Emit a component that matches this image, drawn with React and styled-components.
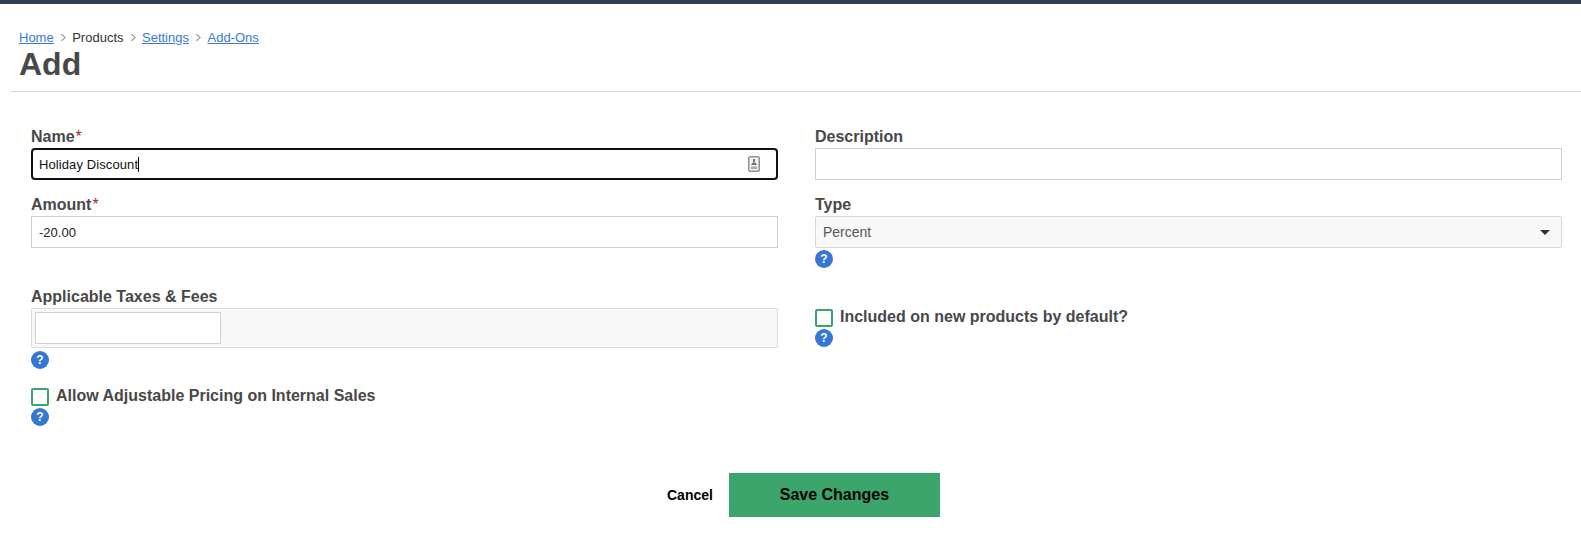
import React from "react";
import styled, { createGlobalStyle } from "styled-components";

const GlobalStyle = createGlobalStyle`
  body {
    margin: 0;
    background: #fff;
    font-family: "Liberation Sans", Arial, sans-serif;
    color: #444;
  }
`;

const App = () => {
  return (
    <Page>
      <GlobalStyle />
      <TopBar />
      <Head>
        <Crumbs>
          <CrumbLink href="#">Home</CrumbLink>
          <Chevron />
          <span>Products</span>
          <Chevron />
          <CrumbLink href="#">Settings</CrumbLink>
          <Chevron />
          <CrumbLink href="#">Add-Ons</CrumbLink>
        </Crumbs>
        <Title>Add</Title>
      </Head>
      <Form>
        <Column>
          <Field>
            <Label>
              Name<Star>*</Star>
            </Label>
            <FocusedBox>
              Holiday Discount
              <Caret />
              <CardIcon />
            </FocusedBox>
          </Field>
          <Field>
            <Label>
              Amount<Star>*</Star>
            </Label>
            <Input defaultValue="-20.00" />
          </Field>
          <TaxField>
            <Label>Applicable Taxes &amp; Fees</Label>
            <TagBox>
              <TagInput />
            </TagBox>
            <Help $top="3px">?</Help>
          </TaxField>
          <CheckField $top="19px">
            <CheckRow>
              <Check />
              <CheckLabel>Allow Adjustable Pricing on Internal Sales</CheckLabel>
            </CheckRow>
            <Help>?</Help>
          </CheckField>
        </Column>
        <Column>
          <Field>
            <Label>Description</Label>
            <Input />
          </Field>
          <Field>
            <Label>Type</Label>
            <Select>
              Percent
              <Arrow />
            </Select>
            <Help>?</Help>
          </Field>
          <CheckField $top="25px">
            <CheckRow>
              <Check />
              <CheckLabel>Included on new products by default?</CheckLabel>
            </CheckRow>
            <Help>?</Help>
          </CheckField>
        </Column>
      </Form>
      <Actions>
        <Cancel>Cancel</Cancel>
        <Save>Save Changes</Save>
      </Actions>
    </Page>
  );
};

const CardIcon = () => (
  <IconSvg width="12" height="16" viewBox="0 0 12 16">
    <rect x="0.75" y="0.75" width="10.5" height="14.5" rx="1.5" fill="#f4f4f4" stroke="#8f8f8f" strokeWidth="1.5" />
    <rect x="5" y="3" width="2" height="3" fill="#777" />
    <path d="M3 9 L4.5 6.5 H7.5 L9 9 Z" fill="#777" />
    <rect x="3" y="10.5" width="6" height="2.5" fill="#aaa" />
  </IconSvg>
);

const Chevron = () => (
  <ChevronSvg width="6.5" height="9" viewBox="0 0 7 9">
    <path d="M1.5 0.8 L5.5 4.5 L1.5 8.2" fill="none" stroke="#888" strokeWidth="1.1" />
  </ChevronSvg>
);

const Page = styled.div`
  width: 1581px;
  height: 541px;
  overflow: hidden;
`;
const TopBar = styled.div`
  height: 4px;
  background: #34404f;
`;
const Head = styled.div`
  margin: 26px 0 0 11px;
  padding: 0 0 0 8px;
  height: 61px;
  border-bottom: 1px solid #d5d5d5;
`;
const Crumbs = styled.div`
  display: flex;
  align-items: center;
  gap: 6px;
  height: 15px;
  font-size: 13px;
  line-height: 15px;
  color: #333;
`;
const CrumbLink = styled.a`
  color: #3a78d6;
  text-decoration: underline;
`;
const ChevronSvg = styled.svg`
  flex: none;
`;
const Title = styled.h1`
  margin: 1px 0 0;
  font-size: 32px;
  line-height: 37px;
  font-weight: bold;
  color: #484848;
`;
const Form = styled.div`
  display: grid;
  grid-template-columns: 747px 747px;
  column-gap: 37px;
  padding: 36px 0 0 31px;
`;
const Column = styled.div`
  display: flex;
  flex-direction: column;
`;
const Field = styled.div`
  margin-bottom: 16px;
`;
const TaxField = styled.div`
  margin-top: 24px;
`;
const CheckField = styled.div`
  margin-top: ${(props) => props.$top};
`;
const Label = styled.div`
  font-size: 16px;
  line-height: 18px;
  font-weight: bold;
  color: #484848;
  margin-bottom: 2px;
`;
const Star = styled.span`
  margin-left: 1px;
  font-weight: normal;
  color: #a3243b;
`;
const Input = styled.input`
  display: block;
  box-sizing: border-box;
  width: 100%;
  height: 32px;
  padding: 0 7px;
  border: 1px solid #d0d0d0;
  border-radius: 0;
  outline: none;
  font: 13px "Liberation Sans", Arial, sans-serif;
  color: #222;
`;
const FocusedBox = styled.div`
  display: flex;
  align-items: center;
  box-sizing: border-box;
  height: 32px;
  padding: 0 16px 0 6px;
  border: 2px solid #111;
  border-radius: 4px;
  font-size: 13px;
  letter-spacing: 0.1px;
  color: #111;
`;
const Caret = styled.span`
  width: 1px;
  height: 15px;
  background: #000;
`;
const IconSvg = styled.svg`
  margin-left: auto;
`;
const Select = styled.div`
  display: flex;
  align-items: center;
  justify-content: space-between;
  box-sizing: border-box;
  height: 32px;
  padding: 0 11px 0 7px;
  background: #f8f8f8;
  border: 1px solid #d8d8d8;
  border-radius: 2px;
  font-size: 14px;
  color: #555;
`;
const Arrow = styled.span`
  width: 0;
  height: 0;
  border-left: 5px solid transparent;
  border-right: 5px solid transparent;
  border-top: 5px solid #333;
`;
const TagBox = styled.div`
  box-sizing: border-box;
  height: 40px;
  padding: 3px;
  background: #f8f8f8;
  border: 1px solid #dcdcdc;
  border-radius: 2px;
`;
const TagInput = styled.div`
  box-sizing: border-box;
  width: 186px;
  height: 32px;
  background: #fff;
  border: 1px solid #d0d0d0;
`;
const Help = styled.div`
  display: flex;
  align-items: center;
  justify-content: center;
  width: 18px;
  height: 18px;
  margin-top: ${(props) => props.$top || "2px"};
  border-radius: 50%;
  background: #3578d4;
  color: #fff;
  font-size: 12px;
  font-weight: bold;
`;
const CheckRow = styled.div`
  display: flex;
  align-items: flex-start;
  gap: 7px;
  height: 18px;
`;
const Check = styled.div`
  box-sizing: border-box;
  flex: none;
  width: 18px;
  height: 18px;
  border: 2px solid #3ca56c;
  border-radius: 2px;
`;
const CheckLabel = styled.div`
  font-size: 16px;
  line-height: 18px;
  font-weight: bold;
  color: #484848;
  margin-top: -1px;
`;
const Actions = styled.div`
  display: flex;
  align-items: center;
  gap: 16px;
  padding-left: 667px;
  margin-top: 47px;
`;
const Cancel = styled.a`
  font-size: 14px;
  font-weight: bold;
  color: #000;
`;
const Save = styled.button`
  width: 211px;
  height: 44px;
  border: none;
  background: #3ca56c;
  color: #000;
  font: bold 16px "Liberation Sans", Arial, sans-serif;
`;

export default App;
